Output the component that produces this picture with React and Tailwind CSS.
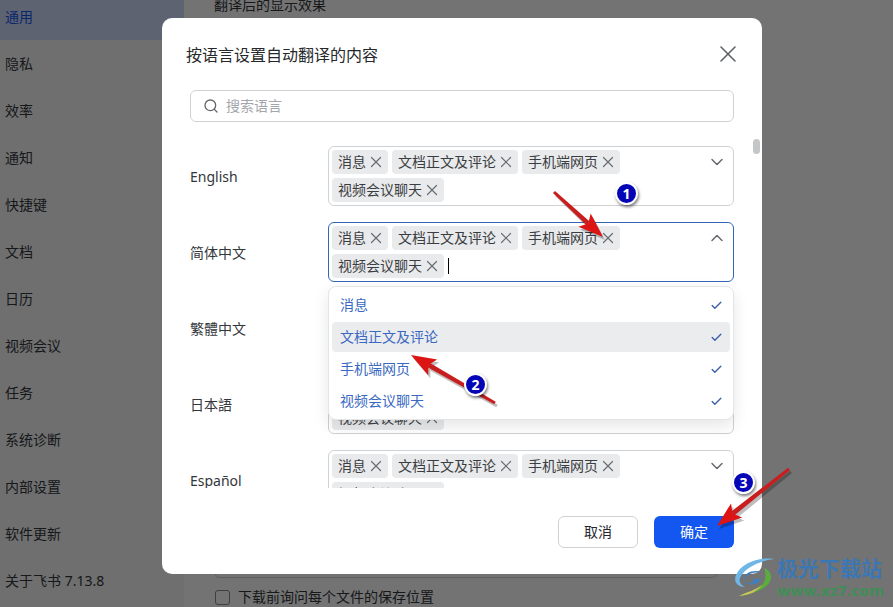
import { Check, ChevronDown, ChevronUp, Search, X } from 'lucide-react';

const font = { fontFamily: '"Noto Sans", "Noto Sans CJK SC", sans-serif' };

const menuItems = ['通用', '隐私', '效率', '通知', '快捷键', '文档', '日历', '视频会议', '任务', '系统诊断', '内部设置', '软件更新', '关于飞书 7.13.8'];
const tags = ['消息', '文档正文及评论', '手机端网页', '视频会议聊天'];
const languages = ['English', '简体中文', '繁體中文', '日本語', 'Español'];

const Tag = ({ label }) => (
  <span className="flex h-6 items-center gap-1 rounded bg-[#e9eaeb] px-[6px] text-sm leading-6 text-[#3a3d42]">
    {label}
    <X size={18} strokeWidth={1.6} className="-m-[3px] text-[#6b6f74]" />
  </span>
);

const LanguageRow = ({ name, open }) => (
  <div className="mb-4 flex items-center pl-7">
    <div className="w-[138px] pt-[2px] text-sm text-[#33363b]">{name}</div>
    <div className={`flex h-[60px] w-[406px] items-start rounded-md border p-[3px] ${open ? 'border-[#3566b5]' : 'border-[#cfd2d5]'}`}>
      <div className="flex w-[377px] flex-wrap gap-1">
        {tags.map((tag) => <Tag key={tag} label={tag} />)}
        {open && <span className="my-1 w-px bg-black" />}
      </div>
      {open
        ? <ChevronUp size={20} strokeWidth={1.7} className="-mx-[2px] mt-[2px] text-[#62666b]" />
        : <ChevronDown size={20} strokeWidth={1.7} className="-mx-[2px] mt-[2px] text-[#62666b]" />}
    </div>
  </div>
);

const Arrow = ({ x1, y1, x2, y2 }) => {
  // arrow head is built from the line's direction
  const len = Math.hypot(x2 - x1, y2 - y1);
  const ux = (x2 - x1) / len;
  const uy = (y2 - y1) / len;
  const bx = x2 - ux * 25;
  const by = y2 - uy * 25;
  const nx = bx + ux * 5;
  const ny = by + uy * 5;
  const head = `${x2},${y2} ${bx - uy * 9},${by + ux * 9} ${nx},${ny} ${bx + uy * 9},${by - ux * 9}`;
  const body = `${x1 - uy * 1.5},${y1 + ux * 1.5} ${nx - uy * 2.5},${ny + ux * 2.5} ${nx + uy * 2.5},${ny - ux * 2.5} ${x1 + uy * 1.5},${y1 - ux * 1.5}`;
  return (
    <g>
      <g fill="#000" opacity="0.25" transform="translate(2 3)">
        <polygon points={body} />
        <polygon points={head} />
      </g>
      <polygon points={body} fill="#c81e1e" />
      <polygon points={head} fill="#dc1414" />
    </g>
  );
};

const Badge = ({ n, className }) => (
  <div className={`absolute flex h-[23px] w-[23px] items-center justify-center rounded-full border-2 border-white bg-[#0505b8] text-[14px] font-bold leading-none text-white shadow-[1px_2px_3px_rgba(0,0,0,0.5)] ${className}`}>
    {n}
  </div>
);

const Watermark = () => (
  <div className="absolute bottom-[8px] left-[734px] flex items-center gap-px">
    <svg width="42" height="42" viewBox="0 0 42 42" fill="none">
      <path d="M40 3C26 1 8 6 2 19c-3 7 2 12 9 12-5-2-7-6-4-11C12 11 26 5 40 3z" fill="#6fb7e6" />
      <path d="M28 16c-9-3-18 1-18 7 0 5 7 7 13 4 2-1 3-2 4-4h-9c3 2 1 4-2 4-4 0-6-2-5-5 2-4 9-6 17-6z" fill="#3f7fc0" />
      <path d="M30 12c7 3 9 9 5 15-5 7-17 11-30 13 11-4 21-7 25-14 2-5 2-9 0-14z" fill="#5cab3f" />
      <path d="M5 40c8-4 17-6 23-11-4 6-12 10-23 11z" fill="#c9c65a" />
    </svg>
    <div className="flex flex-col items-start">
      <span className="text-[21px] font-bold leading-[26px] text-[#3c77b4]">极光下载站</span>
      <span className="text-[15px] font-bold leading-[18px] tracking-[0.4px] text-[#3e8f56]">www.xz7.com</span>
    </div>
  </div>
);

const App = () => {
  return (
    <div className="relative flex h-[607px] w-[893px] overflow-hidden bg-white" style={font}>
      {/* settings page behind the dialog */}
      <aside className="-mt-[7px] w-[184px] shrink-0 bg-[#f6f7f7]">
        {menuItems.map((item, i) => (
          <div key={item} className={`flex h-[47px] items-center pl-[5px] text-sm ${i === 0 ? 'bg-[#cfdcfb] text-[#1456f0]' : 'text-[#33363b]'}`}>
            {item}
          </div>
        ))}
      </aside>
      <main className="flex flex-1 flex-col pl-[30px] pr-[175px]">
        <div className="-mt-[5px] text-sm leading-5 text-[#33363b]">翻译后的显示效果</div>
        <div className="mt-auto h-[60px] rounded-b-md border border-[#cfd2d5]" />
        <label className="mb-px mt-[10px] flex h-[18px] items-center gap-2 pl-px text-sm text-[#33363b]">
          <span className="h-[15px] w-[15px] rounded-[3px] border border-[#888c90]" />
          下载前询问每个文件的保存位置
        </label>
      </main>

      <div className="absolute inset-0 bg-black/55 pl-[162px] pt-[18px]">
        <div className="flex h-[556px] w-[600px] flex-col overflow-hidden rounded-[10px] bg-white">
          <div className="flex h-[72px] items-start justify-between pl-6 pr-5 pt-[25px]">
            <h2 className="text-base leading-6 text-[#26282c]">按语言设置自动翻译的内容</h2>
            <X size={28} strokeWidth={1.3} className="-mt-[3px] text-[#5f6368]" />
          </div>
          <div className="mx-7 flex h-8 items-center gap-[7px] rounded-md border border-[#cfd2d5] pl-3 text-sm text-[#a3a6aa]">
            <Search size={16} className="text-[#62666b]" />
            搜索语言
          </div>
          <div className="relative h-[366px] overflow-hidden pt-6">
            {languages.map((name) => <LanguageRow key={name} name={name} open={name === '简体中文'} />)}
            <div className="absolute right-[2px] top-[17px] h-[15px] w-[7px] rounded bg-[#c4c6c8]" />
            {/* dropdown of the open row */}
            <div className="absolute left-[166px] top-[164px] w-[406px] rounded-lg border border-[#e4e5e7] bg-white p-[3px] shadow-[0_6px_16px_rgba(0,0,0,0.1)]">
              {tags.map((tag) => (
                <div key={tag} className={`mb-[2px] flex h-[30px] items-center justify-between rounded px-2 text-sm text-[#3a68c2] last:mb-0 ${tag === '文档正文及评论' ? 'bg-[#ebecee]' : ''}`}>
                  {tag}
                  <Check size={13} strokeWidth={2.5} className="mr-[-1px] text-[#3a5ea8]" />
                </div>
              ))}
            </div>
          </div>
          <div className="flex justify-end gap-4 pr-7 pt-7">
            <button className="h-8 w-20 rounded-md border border-[#cfd2d5] bg-white text-sm text-[#26282c]">取消</button>
            <button className="h-8 w-20 rounded-md bg-[#1456f0] text-sm text-white">确定</button>
          </div>
        </div>
      </div>

      {/* tutorial annotations */}
      <svg className="pointer-events-none absolute inset-0" width="893" height="607">
        <Arrow x1={554} y1={192} x2={603} y2={237} />
        <Arrow x1={495} y1={403} x2={411} y2={355} />
        <Arrow x1={789} y1={469} x2={717} y2={526} />
      </svg>
      <Badge n="1" className="left-[615px] top-[182px]" />
      <Badge n="2" className="left-[464px] top-[373px]" />
      <Badge n="3" className="left-[732px] top-[471px]" />
      <Watermark />
    </div>
  );
};

export default App;
